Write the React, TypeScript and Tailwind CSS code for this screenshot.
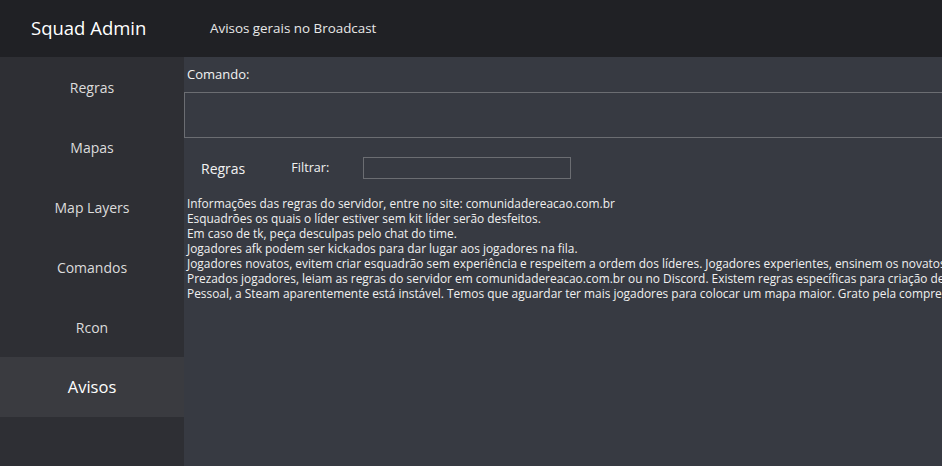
const navItems = ["Regras", "Mapas", "Map Layers", "Comandos", "Rcon", "Avisos"];

const rules = [
  "Informações das regras do servidor, entre no site: comunidadereacao.com.br",
  "Esquadrões os quais o líder estiver sem kit líder serão desfeitos.",
  "Em caso de tk, peça desculpas pelo chat do time.",
  "Jogadores afk podem ser kickados para dar lugar aos jogadores na fila.",
  "Jogadores novatos, evitem criar esquadrão sem experiência e respeitem a ordem dos líderes. Jogadores experientes, ensinem os novatos a jogar.",
  "Prezados jogadores, leiam as regras do servidor em comunidadereacao.com.br ou no Discord. Existem regras específicas para criação de esquadrões.",
  "Pessoal, a Steam aparentemente está instável. Temos que aguardar ter mais jogadores para colocar um mapa maior. Grato pela compreensão.",
];

export default function App() {
  const active = "Avisos";

  return (
    <div
      className="flex h-[466px] w-[942px] flex-col overflow-hidden bg-[#373a42] text-[#f2f2f2]"
      style={{ fontFamily: "'Open Sans', 'Liberation Sans', sans-serif" }}
    >
      {/* header */}
      <div className="flex h-[57px] shrink-0 items-center bg-[#202125]">
        <div className="w-[184px] pl-[31px] text-[18.5px] leading-none text-white">Squad Admin</div>
        <div className="pl-[26px] text-[13.4px] leading-none text-[#e8e8e8]">Avisos gerais no Broadcast</div>
      </div>

      <div className="flex min-h-0 flex-1">
        {/* sidebar */}
        <div className="flex w-[184px] shrink-0 flex-col bg-[#2e2f34]">
          {navItems.map((item) => (
            <div
              key={item}
              className={
                item === active
                  ? "flex h-[60px] items-center justify-center bg-[#3a3b40] text-[16.5px] text-white"
                  : "flex h-[60px] items-center justify-center text-[14px] text-[#dcdcdc]"
              }
            >
              {item}
            </div>
          ))}
        </div>

        {/* content */}
        <div className="min-w-0 flex-1 overflow-hidden">
          <div className="flex h-[35px] items-center pl-[3px] text-[13px] text-[#f2f2f2]">Comando:</div>
          <div className="h-[46px] w-[800px] border border-r-0 border-[#6b6d72]" />

          <div className="flex h-[60px] items-center text-[13px] text-[#f2f2f2]">
            <span className="pl-[17px] text-[14px]">Regras</span>
            <span className="pl-[46px] text-[12.6px]">Filtrar:</span>
            <div className="ml-[34px] h-[22px] w-[208px] border border-[#6b6d72]" />
          </div>

          <div className="-mt-[2px] whitespace-nowrap pl-[3px] text-[11.9px] leading-[15px] text-[#f0f0f0]">
            {rules.map((r) => (
              <div key={r}>{r}</div>
            ))}
          </div>
        </div>
      </div>
    </div>
  );
}
